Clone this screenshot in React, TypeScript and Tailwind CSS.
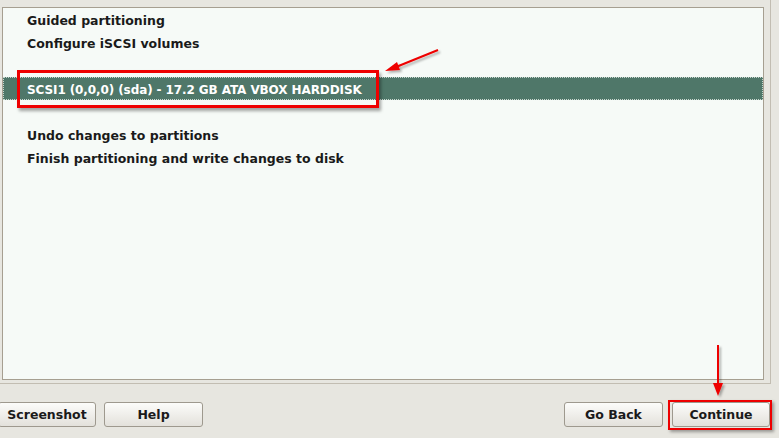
import React from "react";

const font = { fontFamily: '"DejaVu Sans", "Liberation Sans", sans-serif' };

function Row({ text, selected }: { text?: string; selected?: boolean }) {
  if (selected) {
    return (
      <div className="h-[23px] flex items-center pl-[23px] pt-[2px] bg-[#4f7769] border border-dotted border-[#c8d6cf] text-white font-bold text-[12px] tracking-[-0.1px]">
        {text}
      </div>
    );
  }
  return (
    <div className="h-[23px] flex items-center pl-[24px] pt-[3px] text-[#1a1a1a] font-bold text-[12.5px]">
      {text}
    </div>
  );
}

function Btn({ label, className = "" }: { label: string; className?: string }) {
  return (
    <div
      className={`h-[25px] flex items-center justify-center pt-[2px] rounded-[3px] border border-[#9e998e] bg-gradient-to-b from-[#fcfcfa] to-[#e3e1db] text-[12.5px] font-bold text-[#1a1a1a] ${className}`}
    >
      {label}
    </div>
  );
}

export default function App() {
  return (
    <div className="relative w-[779px] h-[438px] bg-[#e7e6e0] overflow-hidden flex flex-col" style={font}>
      <div className="w-[771px] h-[384px] border-r border-b border-[#c2bdb2] pt-[7px] pl-[2px] shrink-0">
        <div className="w-[762px] h-[373px] border border-[#a69f91] bg-[#f6faf7] flex flex-col">
          <Row text="Guided partitioning" />
          <Row text="Configure iSCSI volumes" />
          <Row />
          <Row selected text="SCSI1 (0,0,0) (sda) - 17.2 GB ATA VBOX HARDDISK" />
          <Row />
          <Row text="Undo changes to partitions" />
          <Row text="Finish partitioning and write changes to disk" />
        </div>
      </div>
      <div className="flex items-start pt-[18px] pr-[9px]">
        <Btn label="Screenshot" className="w-[98px] ml-[-2px]" />
        <Btn label="Help" className="w-[99px] ml-[8px]" />
        <div className="flex-1" />
        <Btn label="Go Back" className="w-[99px]" />
        <Btn label="Continue" className="w-[98px] ml-[9px]" />
      </div>

      {/* annotations */}
      <div className="absolute left-[17px] top-[70px] w-[362px] h-[38px] border-[3px] border-[#ee0000] shadow-[2px_3px_3px_rgba(0,0,0,0.35)]" />
      <div className="absolute left-[668px] top-[400px] w-[104px] h-[30px] border-[2px] border-[#ee0000] shadow-[2px_2px_3px_rgba(0,0,0,0.35)]" />
      <svg className="absolute left-0 top-0" width="779" height="438" viewBox="0 0 779 438">
        <defs>
          <filter id="sh" x="-20%" y="-20%" width="140%" height="140%">
            <feDropShadow dx="2" dy="2" stdDeviation="1.2" floodColor="#000" floodOpacity="0.3" />
          </filter>
        </defs>
        <g filter="url(#sh)">
          <line x1="438" y1="50" x2="396" y2="67" stroke="#ee0000" strokeWidth="2" />
          <polygon points="385,71 397,62 400,70" fill="#ee0000" />
          <line x1="718" y1="345" x2="718" y2="385" stroke="#ee0000" strokeWidth="2" />
          <polygon points="718,396 713,383 723,383" fill="#ee0000" />
        </g>
      </svg>
    </div>
  );
}
